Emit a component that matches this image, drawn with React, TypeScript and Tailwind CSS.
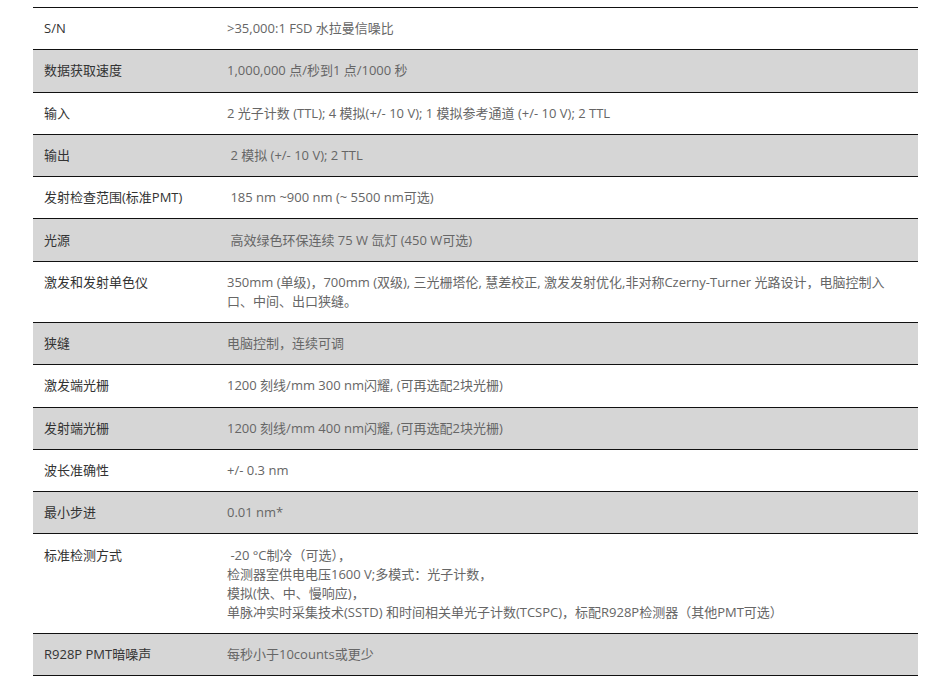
const rows: { label: string; value: React.ReactNode }[] = [
  { label: "S/N", value: ">35,000:1 FSD 水拉曼信噪比" },
  { label: "数据获取速度", value: "1,000,000 点/秒到1 点/1000 秒" },
  {
    label: "输入",
    value: "2 光子计数 (TTL); 4 模拟(+/- 10 V); 1 模拟参考通道 (+/- 10 V); 2 TTL",
  },
  { label: "输出", value: "\u00a02 模拟 (+/- 10 V); 2 TTL" },
  { label: "发射检查范围(标准PMT)", value: "\u00a0185 nm ~900 nm (~ 5500 nm可选)" },
  { label: "光源", value: "\u00a0高效绿色环保连续 75 W 氙灯 (450 W可选)" },
  {
    label: "激发和发射单色仪",
    value: (
      <>
        350mm (单级)，700mm (双级), 三光栅塔伦, 慧差校正, 激发发射优化,非对称Czerny-Turner 光路设计，电脑控制入
        <br />
        口、中间、出口狭缝。
      </>
    ),
  },
  { label: "狭缝", value: "电脑控制，连续可调" },
  { label: "激发端光栅", value: "1200 刻线/mm 300 nm闪耀, (可再选配2块光栅)" },
  { label: "发射端光栅", value: "1200 刻线/mm 400 nm闪耀, (可再选配2块光栅)" },
  { label: "波长准确性", value: "+/- 0.3 nm" },
  { label: "最小步进", value: "0.01 nm*" },
  {
    label: "标准检测方式",
    value: (
      <>
        {"\u00a0-20 °C制冷（可选），"}
        <br />
        检测器室供电电压1600 V;多模式：光子计数，
        <br />
        模拟(快、中、慢响应)，
        <br />
        单脉冲实时采集技术(SSTD) 和时间相关单光子计数(TCSPC)，标配R928P检测器（其他PMT可选）
      </>
    ),
  },
  { label: "R928P PMT暗噪声", value: "每秒小于10counts或更少" },
];

export default function App() {
  return (
    <main
      className="min-h-screen bg-white pt-[7px] pl-[33px]"
      style={{ fontFamily: '"Open Sans", "Noto Sans CJK SC", sans-serif' }}
    >
      <table className="w-[885px] border-collapse border-t border-[#111] text-[13px] leading-[19px]">
        <tbody>
          {rows.map((row, i) => (
            <tr
              key={row.label}
              className={`border-b border-[#111] ${i % 2 === 1 ? "bg-[#d6d6d6]" : "bg-white"}`}
            >
              <td className="w-[183px] py-[11.15px] pl-[11px] align-top text-[#333]">
                {row.label}
              </td>
              <td className="py-[11.15px] pl-[11px] pr-[10px] align-top text-[#666]">
                {row.value}
              </td>
            </tr>
          ))}
        </tbody>
      </table>
    </main>
  );
}
